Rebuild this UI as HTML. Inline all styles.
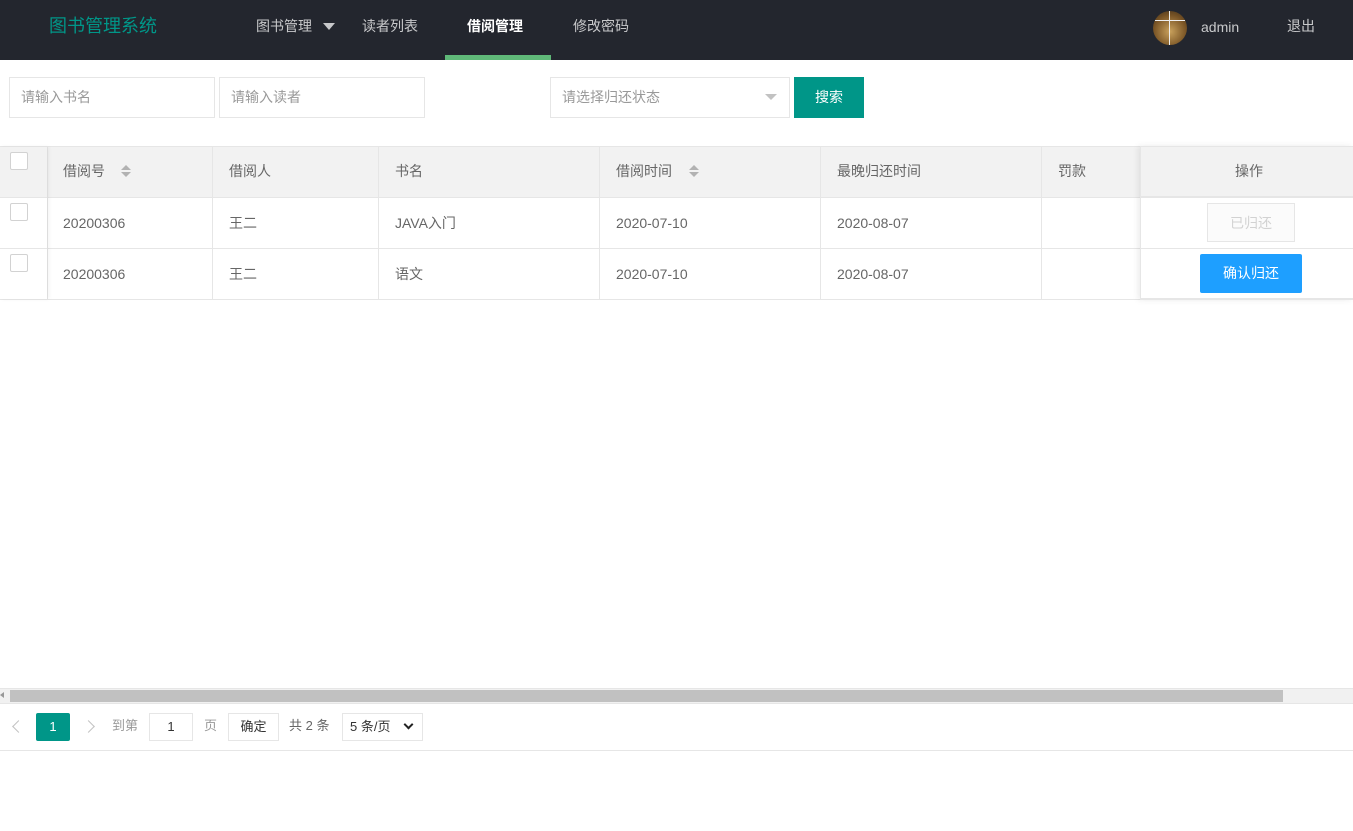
<!DOCTYPE html>
<html><head><meta charset="utf-8"><style>
*{box-sizing:border-box;margin:0;padding:0}
body{width:1353px;height:831px;overflow:hidden;background:#fff;font-family:"Liberation Sans","Noto Sans CJK SC",sans-serif;font-size:14px;color:#666;position:relative}
.hd{position:absolute;left:0;top:0;width:1353px;height:60px;background:#23262e}
.abs{position:absolute}
.nav{color:rgba(255,255,255,.75);font-size:14px;top:16px;line-height:20px}
.inp{position:absolute;top:77px;height:41px;border:1px solid #e6e6e6;padding-left:11px;line-height:39px;color:#999;font-size:14px}
.hr{position:absolute;left:0;width:1353px;height:1px;background:#e6e6e6}
.vl{position:absolute;width:1px;background:#e6e6e6;top:146px;height:153px}
.cell{position:absolute;font-size:14px;color:#666;line-height:20px;height:20px}
.cb{position:absolute;left:10px;width:18px;height:18px;border:1px solid #d2d2d2;background:#fff;border-radius:2px}
.sort{position:absolute;width:0;height:0;border:5px solid transparent}
</style></head><body>
<div class="hd"></div>
<div class="abs" style="left:49px;top:14px;color:#009688;font-size:18px;line-height:24px">图书管理系统</div>
<div class="abs nav" style="left:256px">图书管理</div>
<div class="abs" style="left:323px;top:23px;border:6px solid transparent;border-top:7px solid rgba(255,255,255,.75);border-bottom:0"></div>
<div class="abs nav" style="left:362px">读者列表</div>
<div class="abs nav" style="left:467px;color:#fff;font-weight:bold">借阅管理</div>
<div class="abs" style="left:445px;top:55px;width:106px;height:5px;background:#5fb878"></div>
<div class="abs nav" style="left:573px">修改密码</div>
<div class="abs" style="left:1153px;top:11px;width:34px;height:34px;border-radius:50%;background:radial-gradient(circle at 50% 60%,#c9a15c,#7a5526 60%,#3a2a18)"></div>
<div class="abs" style="left:1169px;top:11px;width:1px;height:34px;background:#eee"></div>
<div class="abs" style="left:1155px;top:20px;width:30px;height:1px;background:#eee"></div>
<div class="abs nav" style="left:1201px;top:17px">admin</div>
<div class="abs nav" style="left:1287px">退出</div>

<div class="inp" style="left:9px;width:206px">请输入书名</div>
<div class="inp" style="left:219px;width:206px">请输入读者</div>
<div class="inp" style="left:550px;width:240px">请选择归还状态</div>
<div class="abs" style="left:765px;top:94px;border:6px solid transparent;border-top:6px solid #c2c2c2;border-bottom:0"></div>
<div class="abs" style="left:794px;top:77px;width:70px;height:41px;background:#009688;color:#fff;text-align:center;line-height:41px">搜索</div>

<div class="abs" style="left:0;top:146px;width:1353px;height:51px;background:#f2f2f2"></div>
<div class="hr" style="top:146px"></div>
<div class="hr" style="top:197px"></div>
<div class="hr" style="top:248px"></div>
<div class="hr" style="top:299px"></div>
<div class="vl" style="left:47px"></div>
<div class="vl" style="left:212px"></div>
<div class="vl" style="left:378px"></div>
<div class="vl" style="left:599px"></div>
<div class="vl" style="left:820px"></div>
<div class="vl" style="left:1041px"></div>
<div class="abs" style="left:1140px;top:146px;width:213px;height:154px;box-shadow:-2px 0 6px rgba(0,0,0,.08);border-left:1px solid #e6e6e6"></div>
<div class="abs" style="left:1141px;top:147px;width:212px;height:50px;background:#f2f2f2;border-bottom:1px solid #e6e6e6"></div>
<div class="abs" style="left:1141px;top:198px;width:212px;height:101px;background:#fff;border-bottom:1px solid #e6e6e6"></div>
<div class="abs" style="left:1141px;top:248px;width:212px;height:1px;background:#e6e6e6"></div>
<div class="abs" style="left:0;top:147px;width:47px;height:152px;box-shadow:2px 0 4px rgba(0,0,0,.05)"></div>
<div class="cb" style="top:152px"></div>
<div class="cb" style="top:203px"></div>
<div class="cb" style="top:254px"></div>

<div class="cell" style="left:63px;top:161px">借阅号</div>
<div class="sort" style="left:121px;top:160px;border-bottom-color:#b2b2b2"></div>
<div class="sort" style="left:121px;top:172px;border-top-color:#b2b2b2"></div>
<div class="cell" style="left:229px;top:161px">借阅人</div>
<div class="cell" style="left:395px;top:161px">书名</div>
<div class="cell" style="left:616px;top:161px">借阅时间</div>
<div class="sort" style="left:689px;top:160px;border-bottom-color:#b2b2b2"></div>
<div class="sort" style="left:689px;top:172px;border-top-color:#b2b2b2"></div>
<div class="cell" style="left:837px;top:161px">最晚归还时间</div>
<div class="cell" style="left:1058px;top:161px">罚款</div>
<div class="cell" style="left:1235px;top:161px">操作</div>

<div class="cell" style="left:63px;top:213px">20200306</div>
<div class="cell" style="left:229px;top:213px">王二</div>
<div class="cell" style="left:395px;top:213px">JAVA入门</div>
<div class="cell" style="left:616px;top:213px">2020-07-10</div>
<div class="cell" style="left:837px;top:213px">2020-08-07</div>
<div class="abs" style="left:1207px;top:203px;width:88px;height:39px;border:1px solid #e6e6e6;background:#fbfbfb;color:#d2d2d2;text-align:center;line-height:39px">已归还</div>

<div class="cell" style="left:63px;top:264px">20200306</div>
<div class="cell" style="left:229px;top:264px">王二</div>
<div class="cell" style="left:395px;top:264px">语文</div>
<div class="cell" style="left:616px;top:264px">2020-07-10</div>
<div class="cell" style="left:837px;top:264px">2020-08-07</div>
<div class="abs" style="left:1200px;top:254px;width:102px;height:39px;background:#1e9fff;color:#fff;text-align:center;line-height:39px;border-radius:2px">确认归还</div>

<div class="abs" style="left:0;top:688px;width:1353px;height:16px;background:#f1f1f1;border-top:1px solid #e6e6e6;border-bottom:1px solid #e6e6e6"></div>
<div class="abs" style="left:10px;top:690px;width:1273px;height:12px;background:#c1c1c1"></div>
<div class="abs" style="left:0;top:692px;border:3px solid transparent;border-right:4px solid #999;border-left:0"></div>

<div class="abs" style="left:14px;top:722px;width:9px;height:9px;border-left:1px solid #c2c2c2;border-bottom:1px solid #c2c2c2;transform:rotate(45deg)"></div>
<div class="abs" style="left:36px;top:713px;width:34px;height:28px;background:#009688;color:#fff;border-radius:2px;text-align:center;line-height:28px;font-size:13px">1</div>
<div class="abs" style="left:84px;top:722px;width:9px;height:9px;border-right:1px solid #c2c2c2;border-top:1px solid #c2c2c2;transform:rotate(45deg)"></div>
<div class="abs" style="left:112px;top:717px;color:#999;font-size:13px;line-height:18px">到第</div>
<div class="abs" style="left:149px;top:713px;width:44px;height:28px;border:1px solid #e6e6e6;text-align:center;line-height:26px;color:#333;font-size:13px">1</div>
<div class="abs" style="left:204px;top:717px;color:#999;font-size:13px;line-height:18px">页</div>
<div class="abs" style="left:228px;top:713px;width:51px;height:28px;border:1px solid #e6e6e6;text-align:center;line-height:26px;color:#333;font-size:13px">确定</div>
<div class="abs" style="left:289px;top:717px;color:#666;font-size:13px;line-height:18px">共 2 条</div>
<div class="abs" style="left:342px;top:713px;width:81px;height:28px;border:1px solid #e6e6e6;line-height:26px;padding-left:7px;color:#333;font-size:13px">5 条/页</div>
<div class="abs" style="left:405px;top:721px;width:7px;height:7px;border-right:2px solid #222;border-bottom:2px solid #222;transform:rotate(45deg)"></div>
<div class="hr" style="top:750px"></div>
</body></html>
